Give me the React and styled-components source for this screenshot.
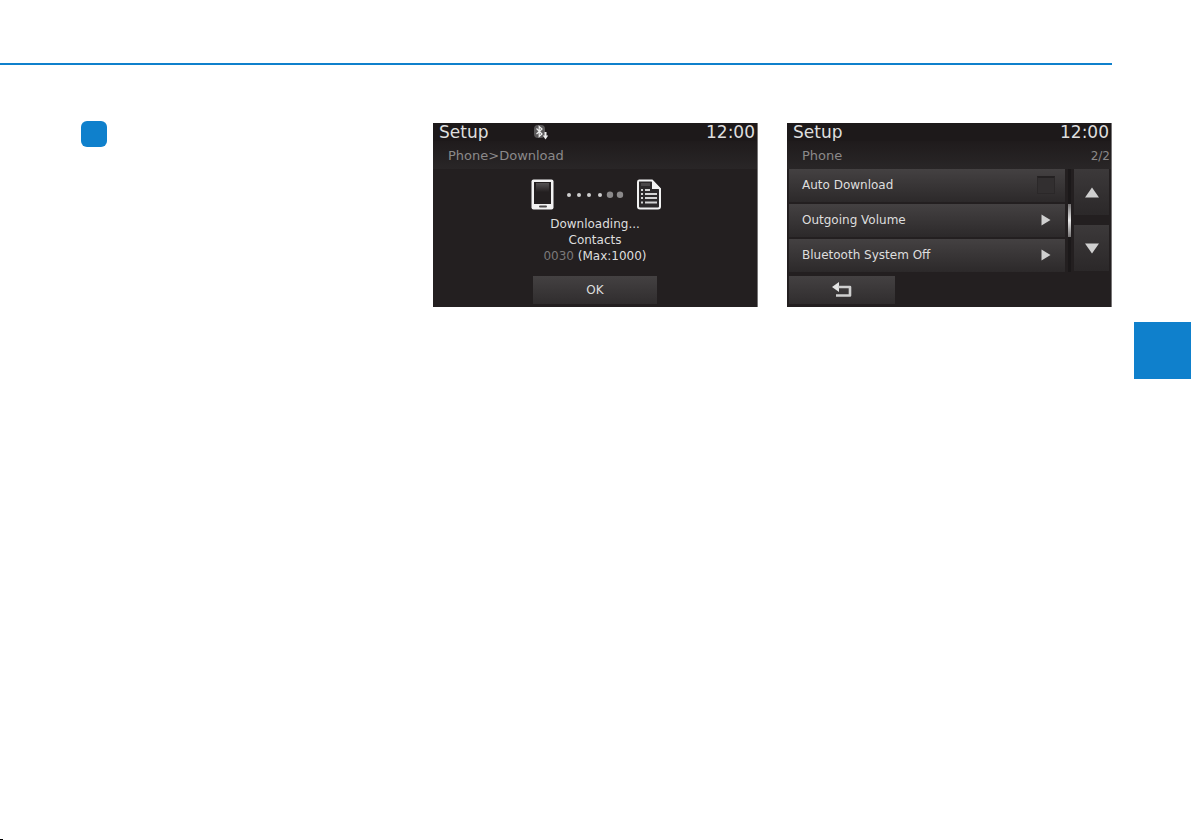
import React, { useState } from 'react';
import styled, { createGlobalStyle } from 'styled-components';

const GlobalStyle = createGlobalStyle`
    * {
        box-sizing: border-box;
    }

    body {
        margin: 0;
        background-color: #ffffff;
        font-family: 'DejaVu Sans', sans-serif;
    }
`

const Page = styled.div`
    min-height: 100vh;
    display: flex;
    flex-direction: column;
`

const PageHeader = styled.header`
    height: 65px;
    margin-right: 80px;
    border-bottom: 2px solid #0f80cc;
`

const Content = styled.div`
    flex: 1;
    display: grid;
    grid-template-columns: 1fr 80px;
    padding-top: 56px;
`

const Columns = styled.main`
    display: grid;
    grid-template-columns: repeat(3, 1fr);
    gap: 29px;
    align-items: start;
    padding-left: 79px;

    @media only screen and (max-width: 900px) {
        grid-template-columns: 1fr;
        padding-left: 24px;
    }
`

const Marker = styled.div`
    width: 26px;
    height: 26px;
    margin-left: 2px;
    border-radius: 6px;
    background-color: #0f80cc;
`

const ChapterTab = styled.aside`
    width: 57px;
    height: 57px;
    margin: 201px 0 0 22px;
    background-color: #0f80cc;
`

const CropMark = styled.footer`
    width: 3px;
    height: 1px;
    background-color: #000000;
`

const Screen = styled.section`
    display: flex;
    flex-direction: column;
    min-height: 184px;
    margin-top: 2px;
    background-color: #231f20;
    border-right: 1px solid #777576;
    color: #dedede;
    font-size: 12px;
    line-height: 16px;
`

const StatusBar = styled.div`
    display: grid;
    grid-template-columns: 94px 16px 1fr;
    align-items: center;
    height: 18px;
    padding: 0 2px 0 6px;
    background-color: #1d191a;
    font-size: 17px;
    line-height: 18px;
`

const Title = styled.h2`
    margin: 0;
    font-size: 17px;
    font-weight: 400;
`

const Clock = styled.time`
    grid-column: 3;
    text-align: right;
`

const PathBar = styled.div`
    display: flex;
    justify-content: space-between;
    align-items: center;
    height: 28px;
    padding: 2px 1px 0 15px;
    background: linear-gradient(#1f1b1c, #292627);
    color: #8b898a;
    font-size: 13px;
`

const PageCount = styled.span`
    font-size: 12px;
`

const Transfer = styled.div`
    display: flex;
    justify-content: center;
    align-items: center;
    gap: 12px;
    height: 32px;
    margin-top: 9px;
    padding-left: 3px;
`

const Message = styled.p`
    flex: 1;
    margin: 6px 0 0;
    text-align: center;
`

const Count = styled.span`
    color: #7b797a;
`

const KeyButton = styled.button`
    display: flex;
    justify-content: center;
    align-items: center;
    width: ${props => props.$width};
    height: 28px;
    margin: ${props => props.$margin};
    padding: 0;
    border: 0;
    background: linear-gradient(#444142, #302d2e);
    color: #dedede;
    font-family: inherit;
    font-size: 12px;
    cursor: pointer;
`

const Menu = styled.div`
    flex: 1;
    display: grid;
    grid-template-columns: 1fr 3px 35px;
    column-gap: 3px;
    align-items: start;
    padding: 0 2px;
`

const Rows = styled.div`
    display: grid;
    grid-auto-rows: 33px;
    row-gap: 2px;
`

const Row = styled.div`
    display: flex;
    justify-content: space-between;
    align-items: center;
    padding: 0 10px 2px 13px;
    background: linear-gradient(#444142, #2c292a);
`

const RowButton = styled.button`
    display: flex;
    justify-content: space-between;
    align-items: center;
    padding: 0 14px 2px 13px;
    border: 0;
    background: linear-gradient(#444142, #2c292a);
    color: #dedede;
    font-family: inherit;
    font-size: 12px;
    line-height: 16px;
    text-align: left;
    cursor: pointer;
`

const Check = styled.input`
    appearance: none;
    width: 18px;
    height: 18px;
    margin: 0;
    border: 1px solid #2b2829;
    border-top: 2px solid #242122;
    background-color: ${props => props.checked ? '#dedede' : '#322f30'};
`

const ScrollTrack = styled.div`
    height: 103px;
    padding-top: 35px;
    background-color: #1b1819;
`

const ScrollThumb = styled.div`
    height: 33px;
    background: linear-gradient(#777576, #e8e8e8, #777576);
`

const Arrows = styled.div`
    display: grid;
    grid-template-rows: 46px 46px;
    row-gap: 10px;
`

const ArrowButton = styled.button`
    display: flex;
    justify-content: center;
    align-items: center;
    padding: 0;
    border: 0;
    background: linear-gradient(#3c393a, #2b2829);
    cursor: pointer;
`

const BluetoothIcon = () => (
    <svg width="16" height="16" viewBox="0 0 16 16" fill="none" aria-hidden="true">
        <rect x="1" y="1" width="11" height="13" rx="4" fill="#5b595a" />
        <path d="M3.5 4.5L9 10L6.2 12.5V2.5L9 5L3.5 10" stroke="#ededed" strokeWidth="1.2" />
        <path d="M12.5 8V13" stroke="#ededed" strokeWidth="2" />
        <path d="M9.8 11.5H15.2L12.5 15.5Z" fill="#ededed" />
    </svg>
)

const PhoneIcon = () => (
    <svg width="23" height="31" viewBox="0 0 23 31" aria-hidden="true">
        <defs>
            <linearGradient id="glass" x1="0" y1="0" x2="0" y2="1">
                <stop offset="0" stopColor="#555253" />
                <stop offset="0.5" stopColor="#231f20" />
            </linearGradient>
        </defs>
        <rect x="0.5" y="0.5" width="22" height="30" rx="2" fill="#f2f2f2" />
        <rect x="3" y="3" width="17" height="22" fill="#231f20" />
        <rect x="5" y="4" width="13" height="18" fill="url(#glass)" />
        <rect x="8" y="26.5" width="8" height="2" rx="1" fill="#4b4849" />
    </svg>
)

const DotsIcon = () => (
    <svg width="58" height="8" viewBox="0 0 58 8" aria-hidden="true">
        <circle cx="3" cy="5" r="2" fill="#cfcfcf" />
        <circle cx="13" cy="5" r="2" fill="#cfcfcf" />
        <circle cx="23" cy="5" r="2" fill="#cfcfcf" />
        <circle cx="34" cy="5" r="2" fill="#cfcfcf" />
        <circle cx="44" cy="4.8" r="3.2" fill="#8b898a" />
        <circle cx="54" cy="4.8" r="3.2" fill="#8b898a" />
    </svg>
)

const ContactsIcon = () => (
    <svg width="26" height="31" viewBox="0 0 26 31" fill="none" aria-hidden="true">
        <path d="M3 1.5H16L24 10V27.5Q24 29.5 22 29.5H4Q2 29.5 2 27.5V3Q2 1.5 3 1.5Z" fill="#2c292a" stroke="#f2f2f2" strokeWidth="2" />
        <path d="M16 1V10H25Z" fill="#f2f2f2" />
        <path d="M5 5.5H14" stroke="#4b4849" strokeWidth="3" />
        <path d="M9 11H14M9 15H21M9 19H21M9 23.5H21" stroke="#d4d4d4" strokeWidth="2" />
        <path d="M5 11H7M5 15H7M5 19H7M5 23.5H7" stroke="#d4d4d4" strokeWidth="2" />
    </svg>
)

const BackIcon = () => (
    <svg width="22" height="16" viewBox="0 0 22 16" fill="none" aria-hidden="true">
        <path d="M1 5L8 0V10Z" fill="#e4e4e4" />
        <path d="M7 5H19V13.5H5" stroke="#cfcfcf" strokeWidth="2.6" strokeLinejoin="round" />
    </svg>
)

const NextIcon = () => (
    <svg width="10" height="12" viewBox="0 0 10 12" aria-hidden="true">
        <path d="M0.5 0.5L9.5 6L0.5 11.5Z" fill="#d0d0d0" />
    </svg>
)

const ScrollIcon = ({ down }) => (
    <svg width="14" height="11" viewBox="0 0 14 11" aria-hidden="true">
        <path d={down ? "M0 0.5H14L7 10.5Z" : "M0 10.5H14L7 0.5Z"} fill="#d0d0d0" />
    </svg>
)

const DownloadScreen = () => {
    return (
        <Screen>
            <StatusBar>
                <Title>Setup</Title>
                <BluetoothIcon />
                <Clock>12:00</Clock>
            </StatusBar>
            <PathBar>Phone&gt;Download</PathBar>
            <Transfer>
                <PhoneIcon />
                <DotsIcon />
                <ContactsIcon />
            </Transfer>
            <Message>
                Downloading...<br />
                Contacts<br />
                <Count>0030</Count> (Max:1000)
            </Message>
            <KeyButton $width="124px" $margin="0 auto 3px">OK</KeyButton>
        </Screen>
    )
}

const PhoneScreen = () => {
    const [auto, setAuto] = useState(false);

    return (
        <Screen>
            <StatusBar>
                <Title>Setup</Title>
                <Clock>12:00</Clock>
            </StatusBar>
            <PathBar>
                Phone
                <PageCount>2/2</PageCount>
            </PathBar>
            <Menu>
                <Rows>
                    <Row>
                        <label htmlFor="auto">Auto Download</label>
                        <Check id="auto" type="checkbox" checked={auto} onChange={() => setAuto(!auto)} />
                    </Row>
                    <RowButton>Outgoing Volume<NextIcon /></RowButton>
                    <RowButton>Bluetooth System Off<NextIcon /></RowButton>
                </Rows>
                <ScrollTrack>
                    <ScrollThumb />
                </ScrollTrack>
                <Arrows>
                    <ArrowButton aria-label="Scroll up"><ScrollIcon /></ArrowButton>
                    <ArrowButton aria-label="Scroll down"><ScrollIcon down /></ArrowButton>
                </Arrows>
            </Menu>
            <KeyButton $width="106px" $margin="0 0 3px 2px" aria-label="Back"><BackIcon /></KeyButton>
        </Screen>
    )
}

export default function App() {
    return (
        <Page>
            <GlobalStyle />
            <PageHeader />
            <Content>
                <Columns>
                    <Marker />
                    <DownloadScreen />
                    <PhoneScreen />
                </Columns>
                <ChapterTab />
            </Content>
            <CropMark />
        </Page>
    )
}
